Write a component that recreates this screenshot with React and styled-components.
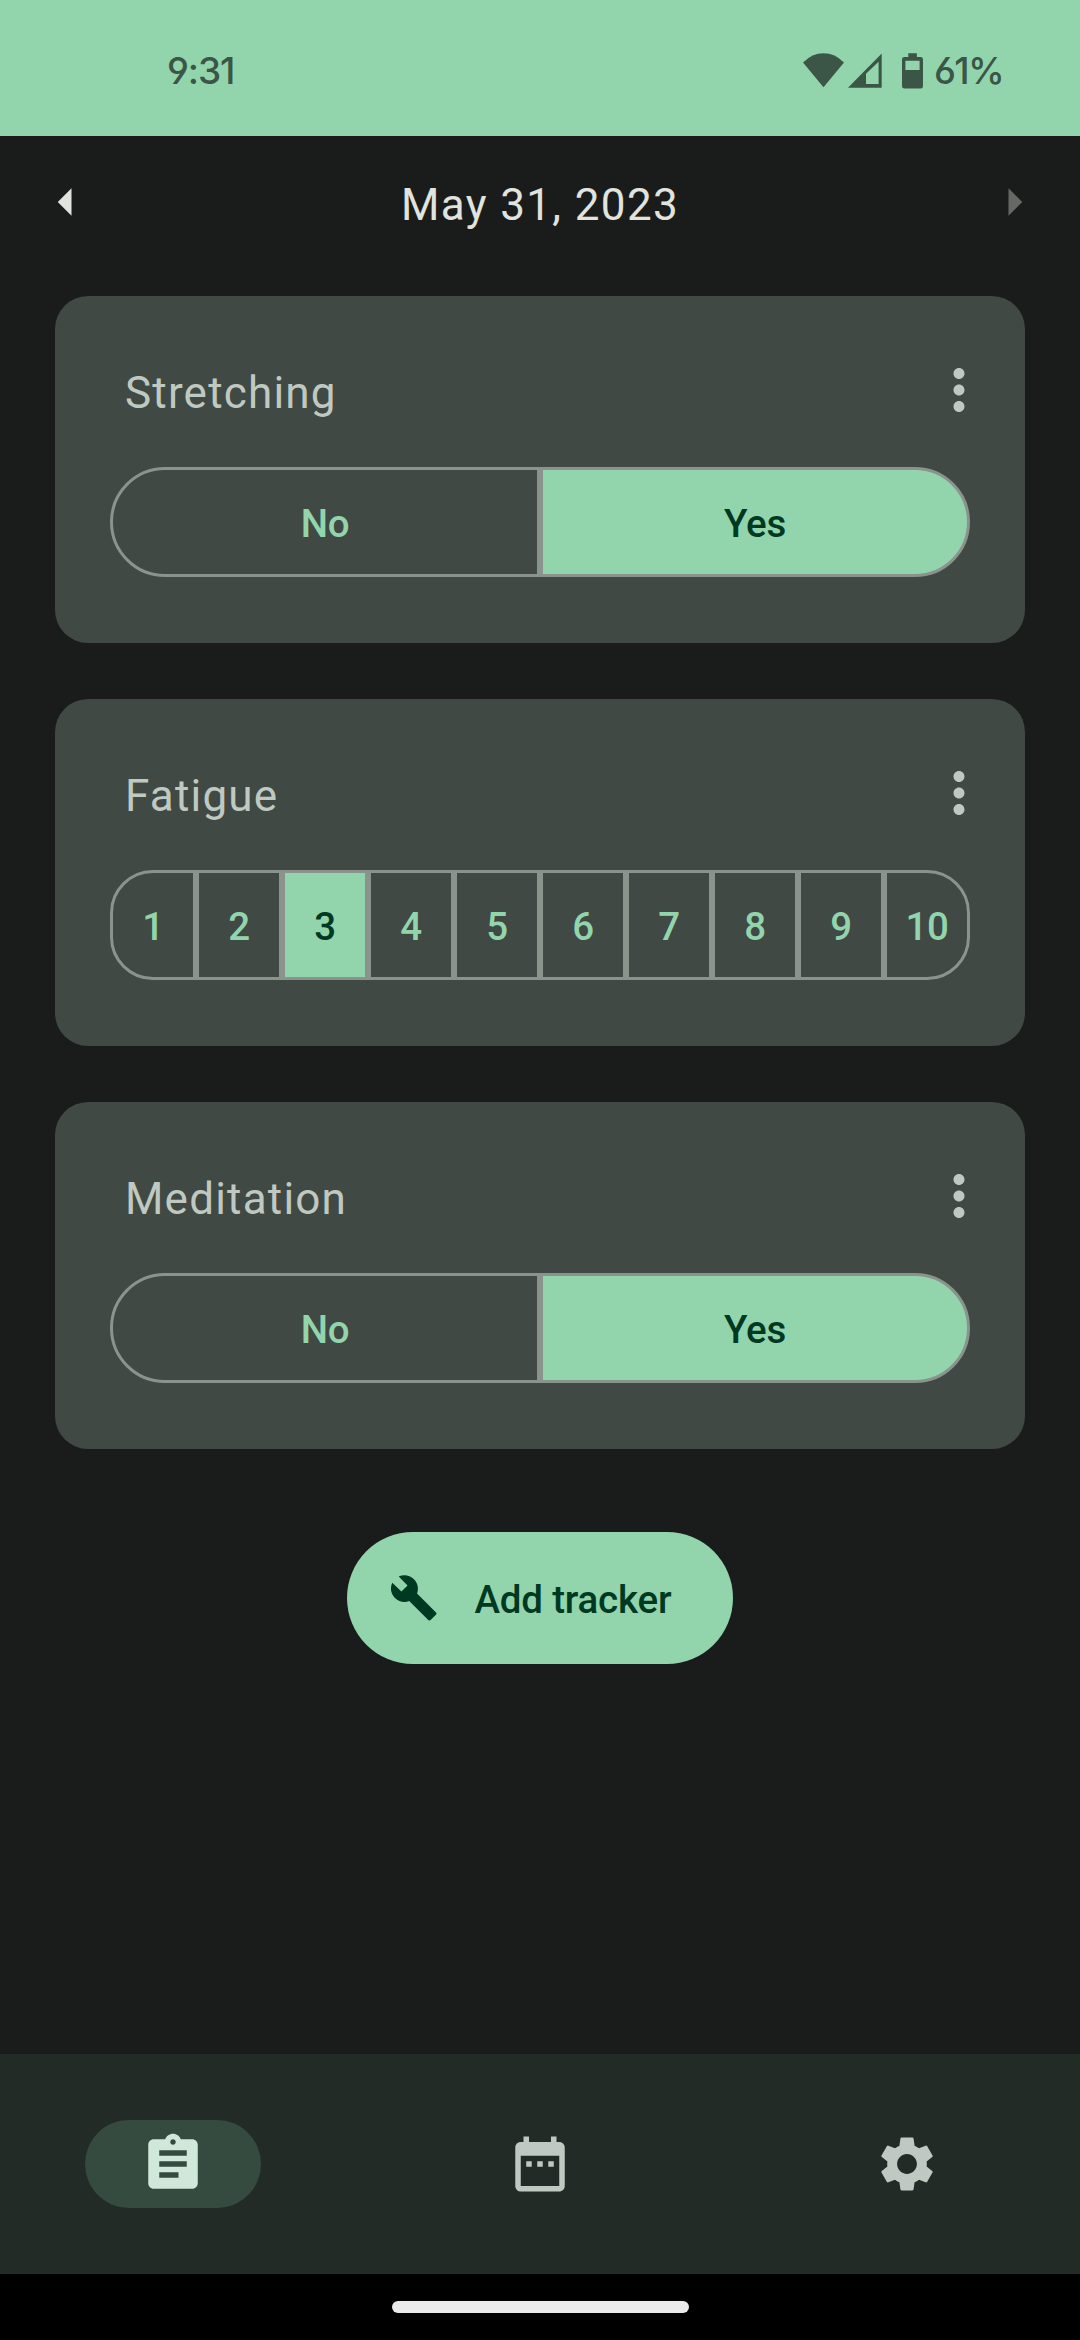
import React, { useState } from "react";
import styled, { createGlobalStyle, ThemeProvider } from "styled-components";
import {
  MdArrowLeft,
  MdArrowRight,
  MdMoreVert,
  MdBuild,
  MdAssignment,
  MdDateRange,
  MdSettings,
} from "react-icons/md";

const theme = {
  primary: "#92d5ad",
  onPrimary: "#003921",
  background: "#1a1c1b",
  onBackground: "#e1e3df",
  card: "#404943",
  onCard: "#c0c9c1",
  outline: "#8a938c",
  nav: "#232b27",
  navActive: "#354b3f",
  onNavActive: "#d0e8d9",
  status: "#3b5646",
};

const GlobalStyle = createGlobalStyle`
  * { box-sizing: border-box; }
  body { margin: 0; background: #000; }
  button { font: inherit; border: 0; padding: 0; margin: 0; background: none; color: inherit; }
  svg { display: block; flex: none; }
`;

const Screen = styled.div`
  width: 1080px;
  height: 2340px;
  display: flex;
  flex-direction: column;
  background: ${(p) => p.theme.background};
  color: ${(p) => p.theme.onBackground};
  font-family: Roboto, "Liberation Sans", sans-serif;
`;

const StatusBar = styled.header`
  height: 136px;
  display: flex;
  justify-content: space-between;
  align-items: flex-start;
  padding: 48px 77px 0 167px;
  background: ${(p) => p.theme.primary};
  color: ${(p) => p.theme.status};
`;

const StatusText = styled.span`
  font-family: Inter, Roboto, sans-serif;
  font-size: 37px;
  line-height: 46px;
  font-weight: 500;
  letter-spacing: ${(p) => p.$tracking}px;
  font-feature-settings: "cv03", "cv04";
`;

const StatusGroup = styled.div`
  display: flex;
  align-items: flex-start;
  gap: 10px;
`;

const StatusIcons = styled.svg`
  margin-top: 4px;
  width: 122px;
  height: 38px;
`;

const DateBar = styled.div`
  height: 132px;
  display: flex;
  align-items: center;
  justify-content: space-between;
  padding: 0 33px;
`;

const DateText = styled.h1`
  margin: 0;
  padding-top: 5px;
  font-size: 44px;
  font-weight: 400;
  letter-spacing: 1.375px;
`;

const IconButton = styled.button`
  display: flex;
  opacity: ${(p) => (p.disabled ? 0.38 : 1)};
`;

const Content = styled.main`
  flex: 1;
  display: flex;
  flex-direction: column;
  align-items: center;
  gap: 56px;
  padding: 28px 55px 0;
`;

const Card = styled.section`
  width: 100%;
  height: 347px;
  padding: 55px 55px 0;
  border-radius: 33px;
  background: ${(p) => p.theme.card};
  color: ${(p) => p.theme.onCard};
`;

const CardHeader = styled.div`
  height: 116px;
  display: flex;
  justify-content: space-between;
  align-items: flex-start;
  padding: 6px 0 0 15px;
  margin-right: -22px;
`;

const CardTitle = styled.h2`
  margin: 0;
  padding-top: 10px;
  font-size: 44px;
  line-height: 52px;
  font-weight: 400;
  letter-spacing: 1.2px;
`;

const Segments = styled.div`
  display: flex;
  height: 110px;
`;

const Segment = styled.button`
  flex: 1;
  display: flex;
  align-items: center;
  justify-content: center;
  padding-top: 3px;
  border: 3px solid ${(p) => p.theme.outline};
  background: ${(p) => (p.$selected ? p.theme.primary : "transparent")};
  color: ${(p) => (p.$selected ? p.theme.onPrimary : p.theme.primary)};
  font-size: 38.5px;
  font-weight: 500;
  letter-spacing: -0.3px;
  &:first-child {
    border-radius: ${(p) => `${p.$radius}px 0 0 ${p.$radius}px`};
  }
  &:last-child {
    border-radius: ${(p) => `0 ${p.$radius}px ${p.$radius}px 0`};
  }
`;

const AddButton = styled.button`
  display: flex;
  align-items: center;
  gap: 36px;
  width: 386px;
  height: 132px;
  margin-top: 27px;
  padding-left: 42px;
  border-radius: 66px;
  background: ${(p) => p.theme.primary};
  color: ${(p) => p.theme.onPrimary};
`;

const AddLabel = styled.span`
  padding-top: 3px;
  font-size: 38.5px;
  font-weight: 500;
  letter-spacing: -0.2px;
  white-space: nowrap;
`;

const NavBar = styled.nav`
  height: 220px;
  display: grid;
  grid-template-columns: repeat(3, 1fr);
  column-gap: 22px;
  place-items: center;
  background: ${(p) => p.theme.nav};
`;

const NavItem = styled.button`
  width: 176px;
  height: 88px;
  display: flex;
  align-items: center;
  justify-content: center;
  border-radius: 44px;
  background: ${(p) => (p.$active ? p.theme.navActive : "transparent")};
  color: ${(p) => (p.$active ? p.theme.onNavActive : p.theme.onCard)};
`;

const GestureBar = styled.footer`
  height: 66px;
  display: flex;
  align-items: center;
  justify-content: center;
  background: #000;
`;

const GestureHandle = styled.div`
  width: 297px;
  height: 12px;
  border-radius: 6px;
  background: #ebebeb;
`;

const YES_NO = ["No", "Yes"];
const SCALE = ["1", "2", "3", "4", "5", "6", "7", "8", "9", "10"];

function Tracker({ title, options, initial, radius }) {
  const [value, setValue] = useState(initial);
  return (
    <Card>
      <CardHeader>
        <CardTitle>{title}</CardTitle>
        <IconButton aria-label="More options">
          <MdMoreVert size={66} />
        </IconButton>
      </CardHeader>
      <Segments>
        {options.map((option) => (
          <Segment
            key={option}
            $selected={option === value}
            $radius={radius}
            onClick={() => setValue(option)}
          >
            {option}
          </Segment>
        ))}
      </Segments>
    </Card>
  );
}

export default function App() {
  return (
    <ThemeProvider theme={theme}>
      <GlobalStyle />
      <Screen>
        <StatusBar>
          <StatusText $tracking={-1.1}>9:31</StatusText>
          <StatusGroup>
            <StatusIcons viewBox="801 52 122 38" fill="currentColor">
              <path d="M822.5 87.3 802 62.5Q811 53.2 822.5 53.2T843 62.5Z" />
              <path
                fillRule="evenodd"
                d="M847 87.8 880.7 53.5V87.8ZM865 73.8V84H877.6V61.7Z"
              />
              <path
                fillRule="evenodd"
                d="M907.3 53.3H915.9V57H919.6Q922 57 922 59.4V86.2Q922 88.6 919.6 88.6H903.4Q901 88.6 901 86.2V59.4Q901 57 903.4 57H907.3ZM904.4 60.7V70H918.6V60.7Z"
              />
            </StatusIcons>
            <StatusText $tracking={-1.7}>61%</StatusText>
          </StatusGroup>
        </StatusBar>
        <DateBar>
          <IconButton aria-label="Previous day">
            <MdArrowLeft size={66} />
          </IconButton>
          <DateText>May 31, 2023</DateText>
          <IconButton aria-label="Next day" disabled>
            <MdArrowRight size={66} />
          </IconButton>
        </DateBar>
        <Content>
          <Tracker title="Stretching" options={YES_NO} initial="Yes" radius={55} />
          <Tracker title="Fatigue" options={SCALE} initial="3" radius={43} />
          <Tracker title="Meditation" options={YES_NO} initial="Yes" radius={55} />
          <AddButton>
            <MdBuild size={49.5} />
            <AddLabel>Add tracker</AddLabel>
          </AddButton>
        </Content>
        <NavBar>
          <NavItem $active aria-label="Trackers">
            <MdAssignment size={66} />
          </NavItem>
          <NavItem aria-label="Calendar">
            <MdDateRange size={66} />
          </NavItem>
          <NavItem aria-label="Settings">
            <MdSettings size={66} />
          </NavItem>
        </NavBar>
        <GestureBar>
          <GestureHandle />
        </GestureBar>
      </Screen>
    </ThemeProvider>
  );
}
